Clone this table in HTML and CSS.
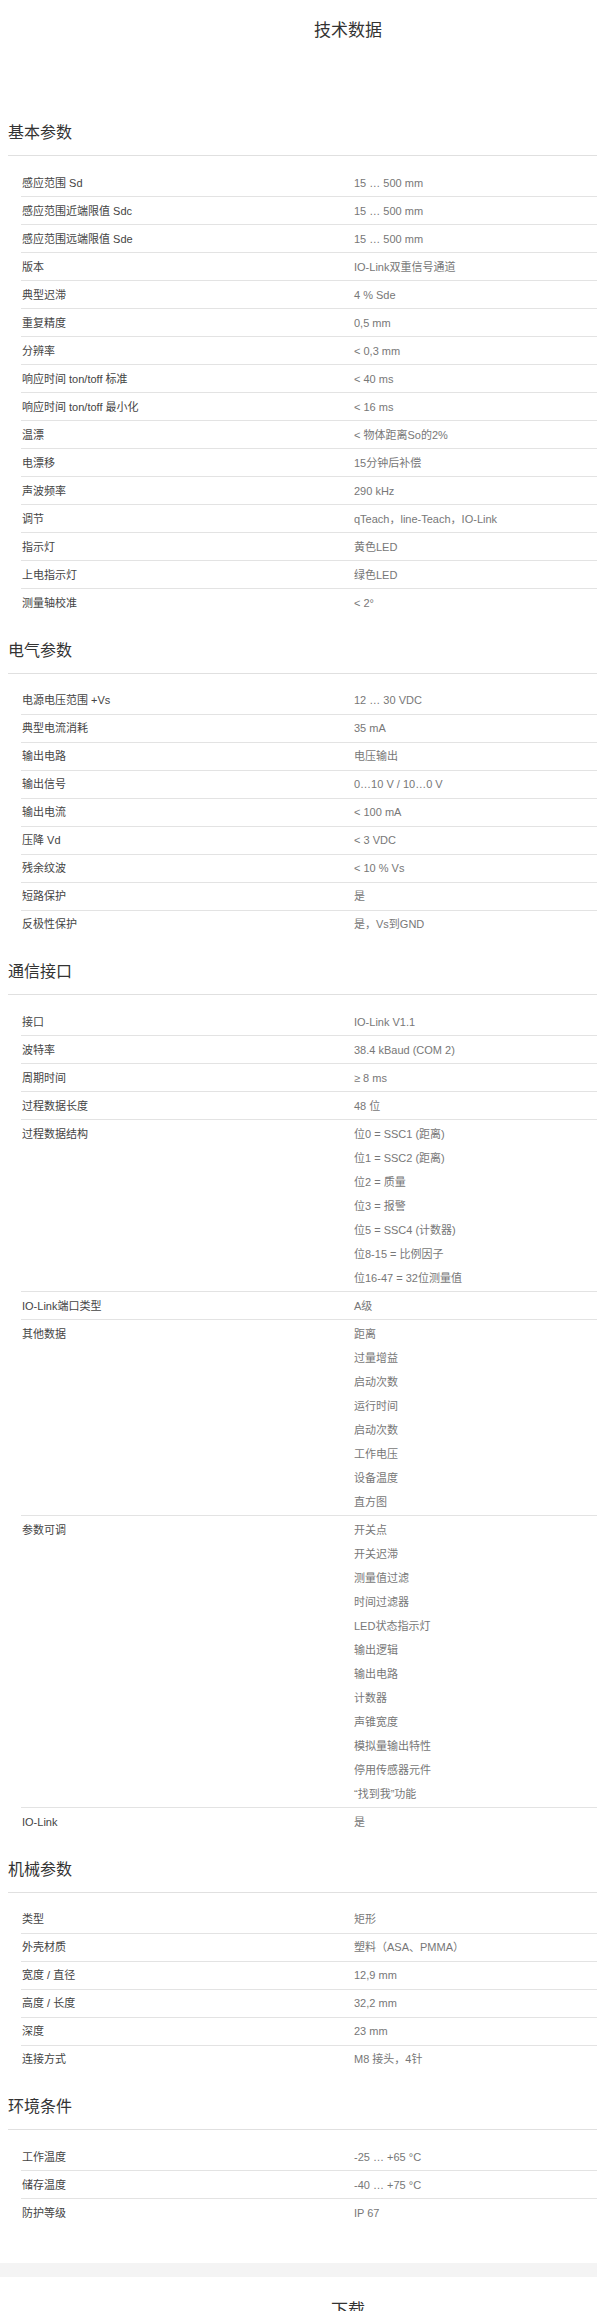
FILE: index.html
```html
<!DOCTYPE html>
<html lang="zh-CN">
<head>
<meta charset="utf-8">
<title>技术数据</title>
<link rel="stylesheet" href="styles.css">
</head>
<body>
<div class="page">
  <h1 class="page-title">技术数据</h1>

  <section class="section first">
    <h2 class="section-title">基本参数</h2>
    <div class="spec">
      <div class="row"><div class="k">感应范围 Sd</div><div class="v">15 … 500 mm</div></div>
      <div class="row"><div class="k">感应范围近端限值 Sdc</div><div class="v">15 … 500 mm</div></div>
      <div class="row"><div class="k">感应范围远端限值 Sde</div><div class="v">15 … 500 mm</div></div>
      <div class="row"><div class="k">版本</div><div class="v">IO-Link双重信号通道</div></div>
      <div class="row"><div class="k">典型迟滞</div><div class="v">4 % Sde</div></div>
      <div class="row"><div class="k">重复精度</div><div class="v">0,5 mm</div></div>
      <div class="row"><div class="k">分辨率</div><div class="v">&lt; 0,3 mm</div></div>
      <div class="row"><div class="k">响应时间 ton/toff 标准</div><div class="v">&lt; 40 ms</div></div>
      <div class="row"><div class="k">响应时间 ton/toff 最小化</div><div class="v">&lt; 16 ms</div></div>
      <div class="row"><div class="k">温漂</div><div class="v">&lt; 物体距离So的2%</div></div>
      <div class="row"><div class="k">电漂移</div><div class="v">15分钟后补偿</div></div>
      <div class="row"><div class="k">声波频率</div><div class="v">290 kHz</div></div>
      <div class="row"><div class="k">调节</div><div class="v">qTeach，line-Teach，IO-Link</div></div>
      <div class="row"><div class="k">指示灯</div><div class="v">黄色LED</div></div>
      <div class="row"><div class="k">上电指示灯</div><div class="v">绿色LED</div></div>
      <div class="row"><div class="k">测量轴校准</div><div class="v">&lt; 2°</div></div>
    </div>
  </section>

  <section class="section">
    <h2 class="section-title">电气参数</h2>
    <div class="spec">
      <div class="row"><div class="k">电源电压范围 +Vs</div><div class="v">12 … 30 VDC</div></div>
      <div class="row"><div class="k">典型电流消耗</div><div class="v">35 mA</div></div>
      <div class="row"><div class="k">输出电路</div><div class="v">电压输出</div></div>
      <div class="row"><div class="k">输出信号</div><div class="v">0…10 V / 10…0 V</div></div>
      <div class="row"><div class="k">输出电流</div><div class="v">&lt; 100 mA</div></div>
      <div class="row"><div class="k">压降 Vd</div><div class="v">&lt; 3 VDC</div></div>
      <div class="row"><div class="k">残余纹波</div><div class="v">&lt; 10 % Vs</div></div>
      <div class="row"><div class="k">短路保护</div><div class="v">是</div></div>
      <div class="row"><div class="k">反极性保护</div><div class="v">是，Vs到GND</div></div>
    </div>
  </section>

  <section class="section">
    <h2 class="section-title">通信接口</h2>
    <div class="spec">
      <div class="row"><div class="k">接口</div><div class="v">IO-Link V1.1</div></div>
      <div class="row"><div class="k">波特率</div><div class="v">38.4 kBaud (COM 2)</div></div>
      <div class="row"><div class="k">周期时间</div><div class="v">≥ 8 ms</div></div>
      <div class="row"><div class="k">过程数据长度</div><div class="v">48 位</div></div>
      <div class="row"><div class="k">过程数据结构</div><div class="v">
        <div>位0 = SSC1 (距离)</div>
        <div>位1 = SSC2 (距离)</div>
        <div>位2 = 质量</div>
        <div>位3 = 报警</div>
        <div>位5 = SSC4 (计数器)</div>
        <div>位8-15 = 比例因子</div>
        <div>位16-47 = 32位测量值</div>
      </div></div>
      <div class="row"><div class="k">IO-Link端口类型</div><div class="v">A级</div></div>
      <div class="row"><div class="k">其他数据</div><div class="v">
        <div>距离</div>
        <div>过量增益</div>
        <div>启动次数</div>
        <div>运行时间</div>
        <div>启动次数</div>
        <div>工作电压</div>
        <div>设备温度</div>
        <div>直方图</div>
      </div></div>
      <div class="row"><div class="k">参数可调</div><div class="v">
        <div>开关点</div>
        <div>开关迟滞</div>
        <div>测量值过滤</div>
        <div>时间过滤器</div>
        <div>LED状态指示灯</div>
        <div>输出逻辑</div>
        <div>输出电路</div>
        <div>计数器</div>
        <div>声锥宽度</div>
        <div>模拟量输出特性</div>
        <div>停用传感器元件</div>
        <div>“找到我”功能</div>
      </div></div>
      <div class="row"><div class="k">IO-Link</div><div class="v">是</div></div>
    </div>
  </section>

  <section class="section">
    <h2 class="section-title">机械参数</h2>
    <div class="spec">
      <div class="row"><div class="k">类型</div><div class="v">矩形</div></div>
      <div class="row"><div class="k">外壳材质</div><div class="v">塑料（ASA、PMMA）</div></div>
      <div class="row"><div class="k">宽度 / 直径</div><div class="v">12,9 mm</div></div>
      <div class="row"><div class="k">高度 / 长度</div><div class="v">32,2 mm</div></div>
      <div class="row"><div class="k">深度</div><div class="v">23 mm</div></div>
      <div class="row"><div class="k">连接方式</div><div class="v">M8 接头，4针</div></div>
    </div>
  </section>

  <section class="section">
    <h2 class="section-title">环境条件</h2>
    <div class="spec">
      <div class="row"><div class="k">工作温度</div><div class="v">-25 … +65 °C</div></div>
      <div class="row"><div class="k">储存温度</div><div class="v">-40 … +75 °C</div></div>
      <div class="row"><div class="k">防护等级</div><div class="v">IP 67</div></div>
    </div>
  </section>
</div>

<div class="band"></div>

<div class="page">
  <h1 class="page-title downloads">下载</h1>
</div>
</body>
</html>
```

FILE: styles.css
```css
html, body {
  margin: 0;
  padding: 0;
  overflow-x: hidden;
  background: #fff;
}

body {
  font-family: "Liberation Sans", "Noto Sans CJK SC", sans-serif;
  color: #333;
}

.page {
  width: 680px;
  margin-left: 8px;
}

.page-title {
  margin: 18px 0 0;
  font-size: 17px;
  line-height: 25px;
  font-weight: normal;
  text-align: center;
  color: #333;
}

.page-title.downloads {
  margin-top: 21px;
}

.section {
  margin-top: 23.5px;
}

.section.first {
  margin-top: 79px;
}

.section-title {
  margin: 0;
  font-size: 16px;
  line-height: 22px;
  font-weight: normal;
  color: #333;
  padding-bottom: 11px;
  border-bottom: 1px solid #e0e0e0;
}

.spec {
  margin: 13px 0 0 13px;
}

.row {
  display: grid;
  grid-template-columns: 332px 1fr;
  border-bottom: 1px solid #e3e3e3;
  padding: 1.5px 0;
  font-size: 11px;
  line-height: 24px;
}

.row:last-child {
  border-bottom: none;
}

.k {
  padding-left: 1px;
  color: #444;
}

.v {
  padding-left: 1px;
  color: #777;
}

.band {
  margin-top: 37px;
  height: 13.5px;
  background: #f4f4f4;
}
```
